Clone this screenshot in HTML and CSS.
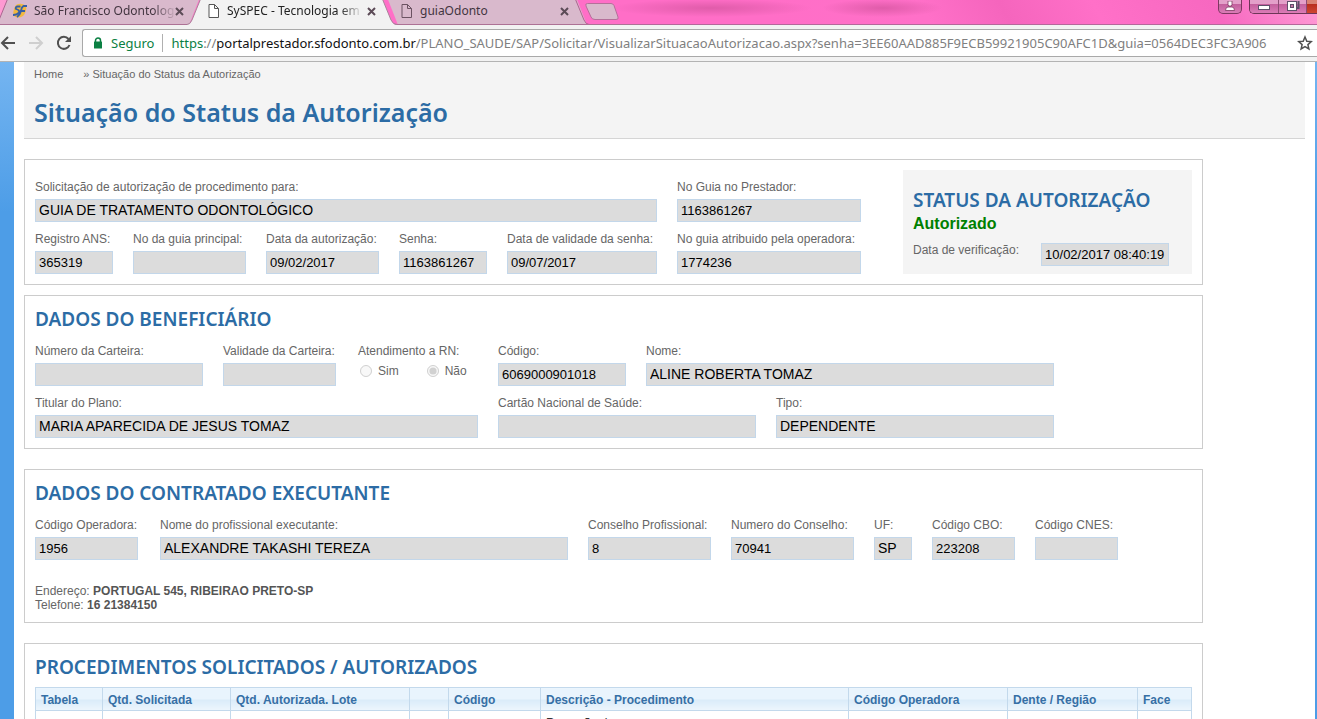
FILE: index.html
```html
<!DOCTYPE html>
<html lang="pt-BR">
<head>
<meta charset="utf-8">
<title>SySPEC - Tecnologia em</title>
<link rel="stylesheet" href="styles.css">
</head>
<body>
<header class="browser">
  <div class="titlebar">
    <svg class="tab-shapes" width="640" height="25" viewBox="0 0 640 25" aria-hidden="true">
      <path d="M387 -3 L576 -3 L587 25 L398 25Z" fill="#d9b9cc"/>
      <path d="M574.500 -3 L584 20 Q586 24.500 589 24.500" fill="none" stroke="#ad6390"/>
      <path d="M8 -3 L-3 25 L189 25 L200 -3Z" fill="#d9b9cc"/>
      <path d="M8 -2 L-1 20" stroke="#ad6390" fill="none"/>
      <path d="M-2 24.500 H187 M396 24.500 H640" stroke="#ad7195"/>
      <path d="M201 -2 L192 20 Q190 25 187 25 H397 Q393 25 391 20 L382 -2Z" fill="#f2f2f2"/>
      <path d="M201 -2 L192 20 Q190 24.500 187 24.500 M397 24.500 Q393 24.500 391 20 L382 -2" fill="none" stroke="#a9849a"/>
      <path d="M587.500 3.500 H611 Q613 3.500 614 5.500 L618 17 Q619 19.500 616 19.500 H595 Q592 19.500 591 17 L586 6 Q585 3.500 587.500 3.500Z" fill="#d9b9cc" stroke="#b56f9a"/>
    </svg>
    <div class="tab tab-first">
      <svg width="16" height="16" viewBox="0 0 16 16" aria-hidden="true"><path d="M4 2 Q9 -1 14 3 Q15 9 11 13 Q6 16 2 13 Q0 7 4 2Z" fill="#f1b83e"/><path d="M8.500 3.500 H5.500 Q3 4 4 6 Q8 7 7 9.500 Q5 12 1 12 M15 3 H11.500 Q9.500 4 9 8 Q8 12 5 14 M8 8 H13" fill="none" stroke="#365fa5" stroke-width="1.800"/></svg>
      <span class="tab-title faded">São Francisco Odontolog</span>
      <button class="tab-close" aria-label="Fechar guia"><svg width="9" height="9" viewBox="0 0 9 9"><path d="M1 1 L8 8 M8 1 L1 8"/></svg></button>
    </div>
    <div class="tab tab-second">
      <svg width="12" height="14" viewBox="0 0 12 14" aria-hidden="true"><path d="M1 .5 H6.500 L10.500 4.500 V13.500 H1Z M6.500 .5 V4.500 H10.500" fill="#fff" stroke="#555"/></svg>
      <span class="tab-title faded">SySPEC - Tecnologia em</span>
      <button class="tab-close" aria-label="Fechar guia"><svg width="9" height="9" viewBox="0 0 9 9"><path d="M1 1 L8 8 M8 1 L1 8"/></svg></button>
    </div>
    <div class="tab tab-third">
      <svg width="12" height="14" viewBox="0 0 12 14" aria-hidden="true"><path d="M1 .5 H6.500 L10.500 4.500 V13.500 H1Z M6.500 .5 V4.500 H10.500" fill="none" stroke="#6b5262"/></svg>
      <span class="tab-title">guiaOdonto</span>
      <button class="tab-close" aria-label="Fechar guia"><svg width="9" height="9" viewBox="0 0 9 9"><path d="M1 1 L8 8 M8 1 L1 8"/></svg></button>
    </div>
    <div class="window-buttons">
      <button class="wbtn user" aria-label="Usuário"><svg width="12" height="12" viewBox="0 0 12 12"><path d="M4 0 H8 V4 L7 5 H5 L4 4Z M1.500 9.500 Q1.500 6 4 6 H8 Q10.500 6 10.500 9.500Z" fill="#fff" stroke="#7d3861" stroke-width=".8"/></svg></button>
      <div class="wgroup">
        <button class="wbtn" aria-label="Minimizar"><svg width="14" height="12" viewBox="0 0 14 12"><rect x="1.500" y="4.500" width="11" height="4" fill="#fff" stroke="#60506b"/></svg></button>
        <button class="wbtn" aria-label="Restaurar"><svg width="14" height="12" viewBox="0 0 14 12"><path d="M5 -1 H12.500 V7 H10" fill="none" stroke="#60506b" stroke-width="2"/><rect x="1.500" y=".5" width="9" height="9" fill="#fff" stroke="#60506b"/><rect x="4.500" y="3.500" width="3" height="3" fill="#c776a5" stroke="#60506b"/></svg></button>
        <button class="wbtn close" aria-label="Fechar"></button>
      </div>
    </div>
  </div>
  <div class="toolbar">
    <button class="nav" aria-label="Voltar"><svg width="16" height="16" viewBox="0 0 16 16"><path d="M15 8 H2 M8 2 L2 8 L8 14" fill="none" stroke="#505050" stroke-width="2"/></svg></button>
    <button class="nav" aria-label="Avançar"><svg width="16" height="16" viewBox="0 0 16 16"><path d="M1 8 H14 M8 2 L14 8 L8 14" fill="none" stroke="#cfcfcf" stroke-width="2"/></svg></button>
    <button class="nav" aria-label="Recarregar"><svg width="16" height="16" viewBox="0 0 16 16"><path d="M13.500 10 A6 6 0 1 1 12.500 4" fill="none" stroke="#505050" stroke-width="2"/><path d="M15 1 V7 H9Z" fill="#505050"/></svg></button>
    <div class="address">
      <svg class="lock" width="10" height="12" viewBox="0 0 10 12" aria-hidden="true"><path d="M2.500 5 V3.500 A2.500 2.500 0 0 1 7.500 3.500 V5" fill="none" stroke="#0b8043" stroke-width="1.500"/><rect x="1" y="4.500" width="8" height="7" rx=".5" fill="#0b8043"/></svg>
      <span class="secure">Seguro</span>
      <span class="url"><span class="scheme">https</span>://<span class="host">portalprestador.sfodonto.com.br</span>/PLANO_SAUDE/SAP/Solicitar/VisualizarSituacaoAutorizacao.aspx?senha=3EE60AAD885F9ECB59921905C90AFC1D&amp;guia=0564DEC3FC3A906</span>
      <button class="star" aria-label="Favoritar"><svg width="16" height="16" viewBox="0 0 16 16"><path d="M8 2 L9.800 6.200 L14.300 6.600 L10.900 9.600 L11.900 14 L8 11.700 L4.100 14 L5.100 9.600 L1.700 6.600 L6.200 6.200Z" fill="none" stroke="#505050" stroke-width="1.500"/></svg></button>
    </div>
  </div>
</header>
<main class="page">
  <div class="page-head">
    <nav class="crumbs"><a href="#">Home</a><span>» Situação do Status da Autorização</span></nav>
    <h1>Situação do Status da Autorização</h1>
  </div>
  <div class="content">
    <section class="panel panel-status">
      <div class="guide">
        <div class="row">
          <div class="field grow"><label for="f1">Solicitação de autorização de procedimento para:</label><input id="f1" readonly value="GUIA DE TRATAMENTO ODONTOLÓGICO"></div>
          <div class="field w184"><label for="f2">No Guia no Prestador:</label><input class="num" id="f2" readonly value="1163861267"></div>
        </div>
        <div class="row">
          <div class="field w78"><label for="f3">Registro ANS:</label><input class="num" id="f3" readonly value="365319"></div>
          <div class="field w113"><label for="f4">No da guia principal:</label><input class="num" id="f4" readonly></div>
          <div class="field w113"><label for="f5">Data da autorização:</label><input class="num" id="f5" readonly value="09/02/2017"></div>
          <div class="field w88"><label for="f6">Senha:</label><input class="num" id="f6" readonly value="1163861267"></div>
          <div class="field w148 grow"><label for="f7">Data de validade da senha:</label><input class="num" id="f7" readonly value="09/07/2017"></div>
          <div class="field w184"><label for="f8">No guia atribuido pela operadora:</label><input class="num" id="f8" readonly value="1774236"></div>
        </div>
      </div>
      <aside class="status">
        <h2>STATUS DA AUTORIZAÇÃO</h2>
        <strong>Autorizado</strong>
        <div class="check"><label for="f9">Data de verificação:</label><input class="num" id="f9" readonly value="10/02/2017 08:40:19"></div>
      </aside>
    </section>

    <section class="panel beneficiary">
      <h2>DADOS DO BENEFICIÁRIO</h2>
      <div class="row">
        <div class="field w168"><label for="b1">Número da Carteira:</label><input class="num" id="b1" readonly></div>
        <div class="field w115"><label for="b2">Validade da Carteira:</label><input class="num" id="b2" readonly></div>
        <fieldset class="field w120"><legend>Atendimento a RN:</legend>
          <div class="radios"><label><input type="radio" name="rn" disabled>Sim</label><label><input type="radio" name="rn" disabled checked>Não</label></div>
        </fieldset>
        <div class="field w128"><label for="b3">Código:</label><input class="num" id="b3" readonly value="6069000901018"></div>
        <div class="field w408"><label for="b4">Nome:</label><input id="b4" readonly value="ALINE ROBERTA TOMAZ"></div>
      </div>
      <div class="row">
        <div class="field w443"><label for="b5">Titular do Plano:</label><input id="b5" readonly value="MARIA APARECIDA DE JESUS TOMAZ"></div>
        <div class="field w258"><label for="b6">Cartão Nacional de Saúde:</label><input class="num" id="b6" readonly></div>
        <div class="field w278"><label for="b7">Tipo:</label><input id="b7" readonly value="DEPENDENTE"></div>
      </div>
    </section>

    <section class="panel">
      <h2>DADOS DO CONTRATADO EXECUTANTE</h2>
      <div class="row">
        <div class="field w105"><label for="c1">Código Operadora:</label><input class="num" id="c1" readonly value="1956"></div>
        <div class="field w408"><label for="c2">Nome do profissional executante:</label><input id="c2" readonly value="ALEXANDRE TAKASHI TEREZA"></div>
        <div class="field w123"><label for="c3">Conselho Profissional:</label><input class="num" id="c3" readonly value="8"></div>
        <div class="field w123"><label for="c4">Numero do Conselho:</label><input class="num" id="c4" readonly value="70941"></div>
        <div class="field w38"><label for="c5">UF:</label><input id="c5" readonly value="SP"></div>
        <div class="field w83"><label for="c6">Código CBO:</label><input class="num" id="c6" readonly value="223208"></div>
        <div class="field w83"><label for="c7">Código CNES:</label><input class="num" id="c7" readonly></div>
      </div>
      <p class="contact">Endereço: <b>PORTUGAL 545, RIBEIRAO PRETO-SP</b><br>Telefone: <b>16 21384150</b></p>
    </section>

    <section class="panel panel-table">
      <h2>PROCEDIMENTOS SOLICITADOS / AUTORIZADOS</h2>
      <table class="procedures">
        <colgroup><col class="c67"><col class="c128"><col class="c179"><col class="c39"><col class="c92"><col class="c308"><col class="c159"><col class="c130"><col class="c54"></colgroup>
        <thead><tr><th>Tabela</th><th>Qtd. Solicitada</th><th>Qtd. Autorizada. Lote</th><th></th><th>Código</th><th>Descrição - Procedimento</th><th>Código Operadora</th><th>Dente / Região</th><th>Face</th></tr></thead>
        <tbody><tr><td></td><td></td><td></td><td></td><td></td><td>Remoção de</td><td></td><td></td><td></td></tr></tbody>
      </table>
    </section>
  </div>
</main>
</body>
</html>
```
FILE: styles.css
```css
* { box-sizing: border-box; }
html, body { height: 100%; }
body {
  margin: 0;
  display: flex;
  flex-direction: column;
  overflow: hidden;
  font: 12px/14px "Liberation Sans", Arial, sans-serif;
  color: #666;
}
button { border: 0; padding: 0; background: none; display: flex; align-items: center; justify-content: center; }
svg { display: block; flex: none; }

.browser { flex: none; font-family: "Noto Sans", sans-serif; background: #f2f2f2; border-bottom: 1px solid #b3b3b3; }
.titlebar {
  position: relative;
  display: flex;
  height: 25px;
  background:
    radial-gradient(ellipse 100px 9px at 54% 8px, #e05caa, transparent),
    radial-gradient(ellipse 60px 9px at 67% 8px, #e05caa, transparent),
    linear-gradient(60deg, #ff9cd3 0, #ff6ec7 18%, #ff6ec7 58%, #ff70c8 70%, #f565bd 76%, #ff70c8 83%, #f768c0 92%, #ff9bd6 100%);
  border-bottom: 1px solid #b5679a;
}
.tab-shapes { position: absolute; left: 0; top: 0; }
.tab { position: relative; display: flex; align-items: center; height: 22px; color: #433540; }
.tab-first { width: 195px; padding: 0 12px 0 12px; gap: 6px; }
.tab-second { width: 193px; padding: 0 12px 0 13px; gap: 7px; color: #222; }
.tab-third { width: 193px; padding: 0 12px 0 13px; gap: 7px; }
.tab-title { flex: 1; min-width: 0; font-size: 12px; line-height: 20px; white-space: nowrap; }
.faded { flex: 1 0 auto; -webkit-mask-image: linear-gradient(90deg, #000 85%, transparent 102%); mask-image: linear-gradient(90deg, #000 85%, transparent 102%); }
.tab-first .faded { margin-right: -5px; }
.tab-close svg { stroke: #5c4b57; stroke-width: 2; }
.window-buttons { margin-left: auto; display: flex; gap: 7px; align-items: flex-start; }
.wbtn { width: 28px; height: 13px; background: linear-gradient(#e3a0c9 0 30%, #c25f9c 31%, #db7cb7); }
.wbtn.user { width: 24px; height: 14px; border: 1px solid #7d3861; border-top: 0; border-radius: 0 0 5px 5px; }
.wgroup { display: flex; border: 1px solid #6d3657; border-width: 0 0 1px 1px; border-radius: 0 0 0 5px; overflow: hidden; }
.wgroup .wbtn + .wbtn { border-left: 1px solid #8d4c74; }
.wbtn.close { width: 11px; background: linear-gradient(#d98173 0 30%, #b82d1d 31%, #cf4631); }
.toolbar { display: flex; align-items: center; height: 36px; }
.nav { width: 28px; height: 28px; }
.nav:first-child { width: 22px; padding-right: 6px; }
.nav:nth-child(3) { margin-right: 4px; }
.address {
  flex: 1;
  min-width: 0;
  display: flex;
  align-items: center;
  height: 28px;
  padding-left: 10px;
  background: #fff;
  border: 1px solid #a9a9a9;
  border-right: 0;
  border-radius: 3px 0 0 3px;
  font-size: 13px;
  line-height: 18px;
  white-space: nowrap;
}
.secure { margin-left: 8px; padding-right: 8px; border-right: 1px solid #b0b0b0; color: #0b8043; }
.url { margin-left: 8px; flex: 1; min-width: 0; overflow: hidden; color: #808080; }
.scheme { color: #0b8043; }
.host { color: #111; }
.star { width: 24px; }

.page {
  flex: 1;
  min-height: 0;
  padding: 0 2px 0 14px;
  background: linear-gradient(#75b5f1, #4d9de7 150px);
  overflow: hidden;
}
.page-head, .content { background: #fff; }
.page-head { padding: 0 10px; }
.crumbs { display: flex; gap: 20px; padding: 5px 10px 0; background: #f4f4f4; font-size: 11px; line-height: 14px; }
.crumbs a { color: inherit; text-decoration: none; }
h1, h2 { margin: 0; font-family: "Noto Sans", sans-serif; font-weight: 600; color: #2c6ca5; }
h1 { padding: 14px 10px 9px; background: #f4f4f4; border-bottom: 1px solid #d5d5d5; font-size: 25px; line-height: 34px; }
h2 { font-size: 19px; line-height: 26px; white-space: nowrap; }
.content { padding: 20px 112px 0 10px; }
.panel { margin-bottom: 20px; padding: 10px; border: 1px solid #ccc; }
.panel > h2 { margin-bottom: 12px; }
.panel-table > h2 { margin-bottom: 7px; }
.row { display: flex; gap: 20px; }
.row + .row { margin-top: 10px; }
.field { min-width: 0; margin: 0; padding: 0; border: 0; }
.field > label, legend { display: block; padding: 0; margin-bottom: 5px; white-space: nowrap; }
.field > input, .check input {
  display: block;
  width: 100%;
  height: 23px;
  padding: 0 3px 1px;
  border: 1px solid #c3d7ea;
  border-radius: 0;
  background: #dcdcdc;
  color: #000;
  font: 14px/20px "Liberation Sans", Arial, sans-serif;
}
.field > .num, .check .num { font-size: 13px; }
.grow { flex: 1; }
.w38 { width: 38px; } .w78 { width: 78px; } .w83 { width: 83px; } .w88 { width: 88px; }
.w105 { width: 105px; } .w113 { width: 113px; } .w115 { width: 115px; } .w120 { width: 120px; }
.w123 { width: 123px; } .w128 { width: 128px; } .w148 { width: 148px; } .w168 { width: 168px; }
.w184 { width: 184px; } .w258 { width: 258px; } .w278 { width: 278px; } .w408 { width: 408px; } .w443 { width: 443px; }
.w105 > input { width: 103px; }
.w115 > input { width: 113px; }
.radios { display: flex; gap: 26px; padding-top: 1px; }
.radios label { display: flex; align-items: center; gap: 6px; }
.radios input { width: 12px; height: 12px; margin: 0 0 0 2px; }
.panel-status { display: flex; gap: 42px; margin-bottom: 10px; }
.guide { flex: 1; min-width: 0; padding-top: 10px; }
.status { width: 289px; padding: 17px 10px 8px; background: #f4f4f4; }
.status strong { display: block; color: #008000; font-size: 16px; line-height: 22px; }
.check { display: flex; gap: 22px; margin-top: 8px; }
.check input { width: 128px; }
.contact { margin: 24px 0 0; }
.contact b { color: #555; }
.procedures { width: 100%; border-collapse: collapse; table-layout: fixed; }
.procedures th, .procedures td { padding: 5px 5px 2px; border: 1px solid #c3d9ec; text-align: left; line-height: 15px; white-space: nowrap; }
.procedures th { background: linear-gradient(#e9f4fd 50%, #d9ebf9 50%, #edf6fd); color: #366fa5; }
.procedures td:nth-child(6) { color: #333; }
.c67 { width: 67px; } .c128 { width: 128px; } .c179 { width: 179px; } .c39 { width: 39px; } .c92 { width: 92px; }
.c308 { width: 308px; } .c159 { width: 159px; } .c130 { width: 130px; } .c54 { width: 54px; }
```
